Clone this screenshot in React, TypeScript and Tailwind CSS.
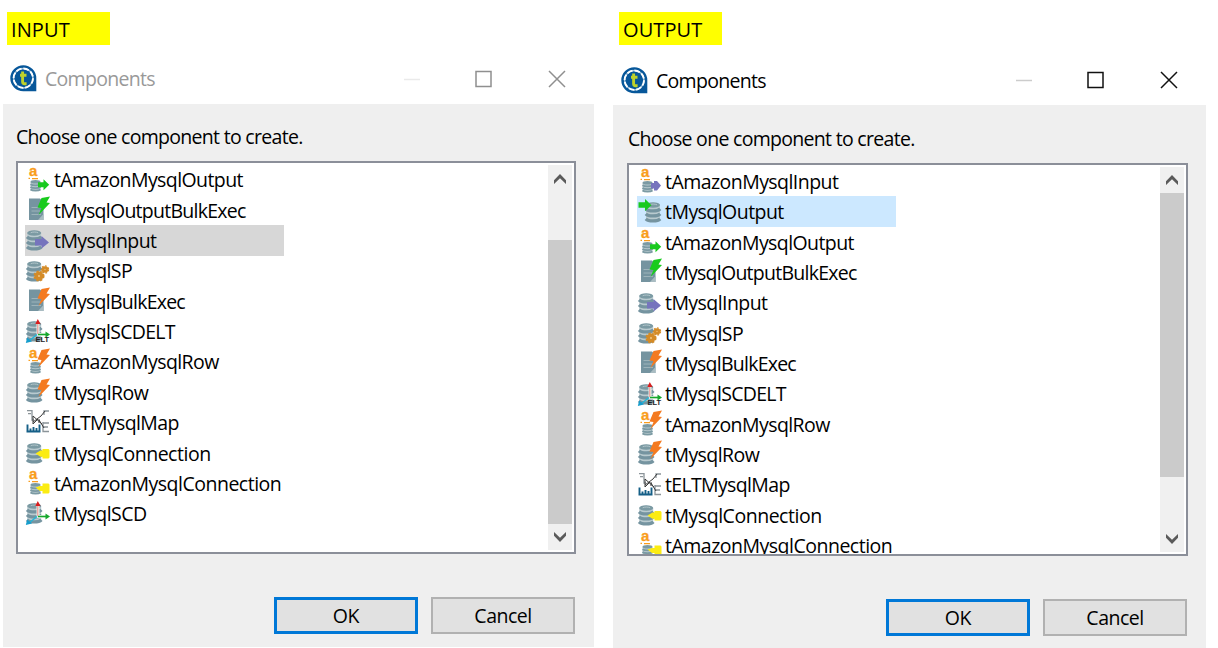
import React from "react";

type Kind =
  | "amazonInput" | "amazonOutput" | "amazonRow" | "amazonConnection"
  | "output" | "input" | "sp" | "row" | "connection" | "scd" | "scdelt"
  | "outputBulk" | "bulk" | "map";

const ITEMS: Record<string, { kind: Kind; spacing: string }> = {
  tAmazonMysqlInput: { kind: "amazonInput", spacing: "tracking-[-0.55px]" },
  tMysqlOutput: { kind: "output", spacing: "tracking-[-0.55px]" },
  tAmazonMysqlOutput: { kind: "amazonOutput", spacing: "tracking-[-0.58px]" },
  tMysqlOutputBulkExec: { kind: "outputBulk", spacing: "tracking-[-0.74px]" },
  tMysqlInput: { kind: "input", spacing: "tracking-[-0.56px]" },
  tMysqlSP: { kind: "sp", spacing: "tracking-[-0.6px]" },
  tMysqlBulkExec: { kind: "bulk", spacing: "tracking-[-0.75px]" },
  tMysqlSCDELT: { kind: "scdelt", spacing: "tracking-[-0.7px]" },
  tAmazonMysqlRow: { kind: "amazonRow", spacing: "tracking-[-0.57px]" },
  tMysqlRow: { kind: "row", spacing: "tracking-[-0.55px]" },
  tELTMysqlMap: { kind: "map", spacing: "tracking-[-0.65px]" },
  tMysqlConnection: { kind: "connection", spacing: "tracking-[-0.47px]" },
  tAmazonMysqlConnection: { kind: "amazonConnection", spacing: "tracking-[-0.5px]" },
  tMysqlSCD: { kind: "scd", spacing: "tracking-[-0.55px]" },
};

function Database({ x = 1.7, y = 5 }: { x?: number; y?: number }) {
  return (
    <g transform={`translate(${x} ${y})`}>
      <path d="M0.500 3C2 0 13 0 14.500 3V17.500C12 20.500 3 20.500 0.500 17.500Z" fill="#b9cacf" />
      <ellipse cx="7.500" cy="3" rx="7" ry="2.800" fill="#7b9aa3" />
      <path d="M4 2.800c2-1 5.500-1 7.500 0" stroke="#b5c8cd" strokeWidth="0.900" fill="none" />
      <g fill="none" stroke="#7594a0" strokeWidth="3.200">
        <path d="M0.300 6.800C3 9.600 12 9.600 14.700 6.800" />
        <path d="M0.300 11.800C3 14.600 12 14.600 14.700 11.800" />
        <path d="M0.300 16.800C3 19.600 12 19.600 14.700 16.800" />
      </g>
    </g>
  );
}

function AmazonBase() {
  return (
    <g>
      <text x="4" y="11.300" fontSize="15" fontWeight="700" fill="#f99d1c" stroke="#f99d1c" strokeWidth="0.300" fontFamily="Liberation Sans, sans-serif">a</text>
      <path d="M3.500 13.300h1.500M7 13.700h6" stroke="#f99d1c" strokeWidth="1.200" />
      <path d="M5.500 17h10v8h-10z" fill="#b9cacf" />
      <ellipse cx="10.500" cy="16.800" rx="5" ry="1.800" fill="#7b9aa3" />
      <g fill="none" stroke="#7b9aa3" strokeWidth="1.900">
        <path d="M5.500 19.200c2 1.600 8 1.600 10 0M5.500 21.900c2 1.600 8 1.600 10 0M5.500 24.500c2 1.500 8 1.500 10 0" />
      </g>
    </g>
  );
}

function Page() {
  return (
    <g>
      <path d="M4 3.500h11l3.500 3.500v18H4z" fill="#7594a0" />
      <path d="M6.500 12.500h7M6.500 16h9.500M6.500 19.500h9.500" stroke="#9db3ba" strokeWidth="1" />
      <path d="M18.500 19L13 25h5.500z" fill="#a9bcc2" />
    </g>
  );
}

const Bolt = ({ fill }: { fill: string }) => (
  <path d="M16.500 3L25 1.500L21.500 7.500L25 8L13.500 20L16.500 13L12.500 12.500Z" fill={fill} />
);

const Axes = () => (
  <g>
    <path d="M13 8v10.500h8" stroke="#e9f4e9" strokeWidth="3" fill="none" />
    <path d="M12.800 8v10" stroke="#e88" strokeWidth="1" />
    <path d="M12.800 3l2.700 5h-5.200z" fill="#d81e1e" />
    <path d="M13 18.500h8.500" stroke="#16a82d" strokeWidth="1.500" />
    <path d="M20.500 15.600l4.500 2.900l-4.500 2.900z" fill="#16a82d" />
    <path d="M12 18.500L4 25" stroke="#27b4d6" strokeWidth="1.600" />
    <path d="M0.800 27L2.200 21.500L7 25.500Z" fill="#169dcc" />
  </g>
);

function Icon({ kind }: { kind: Kind }) {
  return (
    <svg width="27" height="30" viewBox="0 0 27 30" className="shrink-0 overflow-visible">
      {kind.startsWith("amazon") && <AmazonBase />}
      {(kind === "outputBulk" || kind === "bulk") && <Page />}
      {["input", "sp", "row", "connection", "scd", "scdelt"].includes(kind) && <Database />}
      {kind === "output" && <Database x={8.5} y={5} />}
      {kind === "amazonInput" && <path d="M14 17h3v-2h3l4 4.500l-4 5h-3v-2h-3z" fill="#7674bd" />}
      {kind === "amazonOutput" && <path d="M13 17.200h5.500v-3l5.700 5.500l-5.700 5.500v-3H13z" fill="#18c91e" />}
      {kind === "output" && <path d="M1.500 5.200h6.500V2l6.500 6.300L8 14v-3.200H1.500z" fill="#18c91e" />}
      {kind === "input" && <path d="M10 14h6.500v-3l7.500 6.500l-7.500 6v-3H10z" fill="#7674bd" />}
      {(kind === "row" || kind === "bulk" || kind === "amazonRow") && <Bolt fill="#f47a20" />}
      {kind === "outputBulk" && <Bolt fill="#18cb1d" />}
      {kind === "sp" && (
        <g fill="#d48b27">
          <circle cx="14" cy="20" r="4.500" />
          <circle cx="14" cy="20" r="4.800" fill="none" stroke="#d48b27" strokeWidth="1.500" strokeDasharray="2.200 1.700" />
          <circle cx="20" cy="13.500" r="3.300" />
          <circle cx="20" cy="13.500" r="3.600" fill="none" stroke="#d48b27" strokeWidth="1.200" strokeDasharray="1.800 1.500" />
          <circle cx="14" cy="20" r="1.100" fill="#efc27c" />
          <circle cx="20" cy="13.500" r="0.700" fill="#efc27c" />
        </g>
      )}
      {kind === "connection" && (
        <path d="M10.500 15.500l5-3h2V11h6l1 1v7.500l-1 1h-6v-1.700h-2z" fill="#fbec13" />
      )}
      {kind === "amazonConnection" && (
        <path d="M10.500 19.500l4.500-1.500h2.500v-2.500h6l1 1v8l-1 1h-6v-2.500H15z" fill="#fbec13" />
      )}
      {(kind === "scd" || kind === "scdelt") && <Axes />}
      {kind === "scdelt" && (
        <text x="10.500" y="26" fontSize="7.500" fontWeight="700" textLength="13.500" fill="#222" fontFamily="Liberation Sans, sans-serif">ELT</text>
      )}
      {kind === "map" && (
        <g fill="none">
          <path d="M2 3.700h5v9.300h2M3 6.700h3M24 4h-5v4M18 15v9.500h6M18 16h6M18 20h5" stroke="#8b9499" strokeWidth="1.300" />
          <path d="M8 9l9 8M20 4l-4 5l-8 6M8 9v8l5-5M14 12v4M14 13l5 8" stroke="#3b3b3b" strokeWidth="1" />
          <path d="M2.500 17.500v8M5.500 21.500v4M8.500 20v5M11.500 21v4M14.500 17.500v7.500M1.500 24.500h14" stroke="#155f87" strokeWidth="1.900" />
        </g>
      )}
    </svg>
  );
}

const Logo = () => (
  <svg width="27" height="27" viewBox="0 0 27 27" className="-ml-px shrink-0">
    <path d="M13.300 .2A13 13 0 0 1 26.300 13.200v13H13.300A13 13 0 0 1 13.300 .2z" fill="#07579a" />
    <circle cx="13.300" cy="13.200" r="9.700" fill="none" stroke="#a9c8de" strokeWidth="1.500" />
    <circle cx="13.300" cy="13.200" r="9.700" fill="none" stroke="#fff" strokeWidth="1.900" strokeDasharray="5.600 2" />
    <path d="M12.600 6.500v10.300q0 2 2 2h2M10 10.200h6.500" stroke="#bfd22b" strokeWidth="2.900" fill="none" />
  </svg>
);

const Chevron = ({ down }: { down?: boolean }) => (
  <svg width="12" height="10" viewBox="0 0 12 10" className={down ? "rotate-180" : ""}>
    <path d="M0 6.300L6 0l6 6.300V10L6 4.300L0 10z" fill="#5a5a5a" />
  </svg>
);

interface DialogProps {
  label: string;
  items: string[];
  selected: string;
  active: boolean;
}

function Dialog({ label, items, selected, active }: DialogProps) {
  const stroke = active ? "#111" : "#8f8f8f";
  return (
    <section className={`flex shrink-0 flex-col ${active ? "w-[593px]" : "h-[647px] w-[591px]"}`}>
      <div className={`mt-3 h-[33px] w-[103px] bg-[#ffff00] pl-1 text-[20px] leading-[35px] tracking-[0.1px] ${active ? "ml-1.5" : "ml-1"}`}>
        {label}
      </div>
      <header className={`flex shrink-0 items-start pt-5 ${active ? "h-[60px] pl-[9px]" : "h-[59px] pl-2"}`}>
        <div className={`flex w-full items-center ${active ? "mt-px" : ""}`}>
          <Logo />
          <span className={`ml-2 text-[19.5px] leading-[27px] tracking-[-0.7px] ${active ? "pt-px text-black" : "text-[#999]"}`}>Components</span>
          <svg width="164" height="20" viewBox="0 0 164 20" className="mr-[28px] ml-auto" fill="none">
            <path d="M2 10.500h16" stroke={active ? "#ccc" : "#eaeaea"} strokeWidth="1.500" />
            <rect x="74" y="2.500" width="15" height="15" stroke={stroke} strokeWidth="1.500" />
            <path d="M147 2l16 16M163 2l-16 16" stroke={stroke} strokeWidth="1.500" />
          </svg>
        </div>
      </header>
      <main className={`flex grow flex-col bg-[#efefef] ${active ? "pl-3.5" : "pl-[13px]"}`}>
        <p className={`text-[19.5px] leading-[30px] tracking-[-0.7px] ${active ? "h-[58px] pt-[19px] pl-px" : "h-[57px] pt-[18px]"}`}>
          Choose one component to create.
        </p>
        <div className={`flex h-[393px] shrink-0 border-2 border-[#8b8f99] bg-white ${active ? "w-[561px]" : "w-[560px]"}`}>
          <ul className={`grow overflow-hidden ${active ? "pt-px pl-2" : "pt-[1.5px] pl-[7px]"}`}>
            {items.map((name) => (
              <li
                key={name}
                className={`flex h-[30.35px] w-[259px] items-center ${name === selected ? (active ? "bg-[#cce8ff]" : "bg-[#d7d7d7]") : ""}`}
              >
                <Icon kind={ITEMS[name].kind} />
                <span className={`pt-[1.5px] text-[19.5px] leading-[30px] whitespace-nowrap ${active ? "ml-px" : "ml-[2px]"} ${ITEMS[name].spacing}`}>{name}</span>
              </li>
            ))}
          </ul>
          <div className="mt-[2px] mr-[2px] mb-[2px] flex w-[24px] flex-col items-center bg-[#f0f0f0]">
            <div className={`flex items-center ${active ? "h-[26px]" : "h-[28px]"}`}><Chevron /></div>
            <div className={`h-[284px] w-full bg-[#cbcbcb] ${active ? "" : "mt-[47px]"}`} />
            <div className="mt-auto flex h-[26px] items-center"><Chevron down /></div>
          </div>
        </div>
        <div className={`mt-[43px] flex gap-[13px] ${active ? "pl-[259px]" : "pl-[258px]"}`}>
          <button className="h-[37px] w-[144px] border-3 border-[#0078d7] bg-[#e1e1e1] text-[19.5px] leading-[30px] tracking-[-0.4px]">OK</button>
          <button className="h-[37px] w-[144px] border-2 border-[#b1b1b1] bg-[#e1e1e1] text-[19.5px] leading-[30px] tracking-[-0.5px]">Cancel</button>
        </div>
      </main>
    </section>
  );
}

const names = Object.keys(ITEMS);

export default function App() {
  return (
    <div className="flex h-[648px] w-[1218px] gap-[19px] overflow-hidden bg-white pl-[3px] font-['Open_Sans','Noto_Sans',sans-serif] text-black">
      <Dialog label="INPUT" items={names.slice(2)} selected="tMysqlInput" active={false} />
      <Dialog label="OUTPUT" items={names.slice(0, 13)} selected="tMysqlOutput" active />
    </div>
  );
}
